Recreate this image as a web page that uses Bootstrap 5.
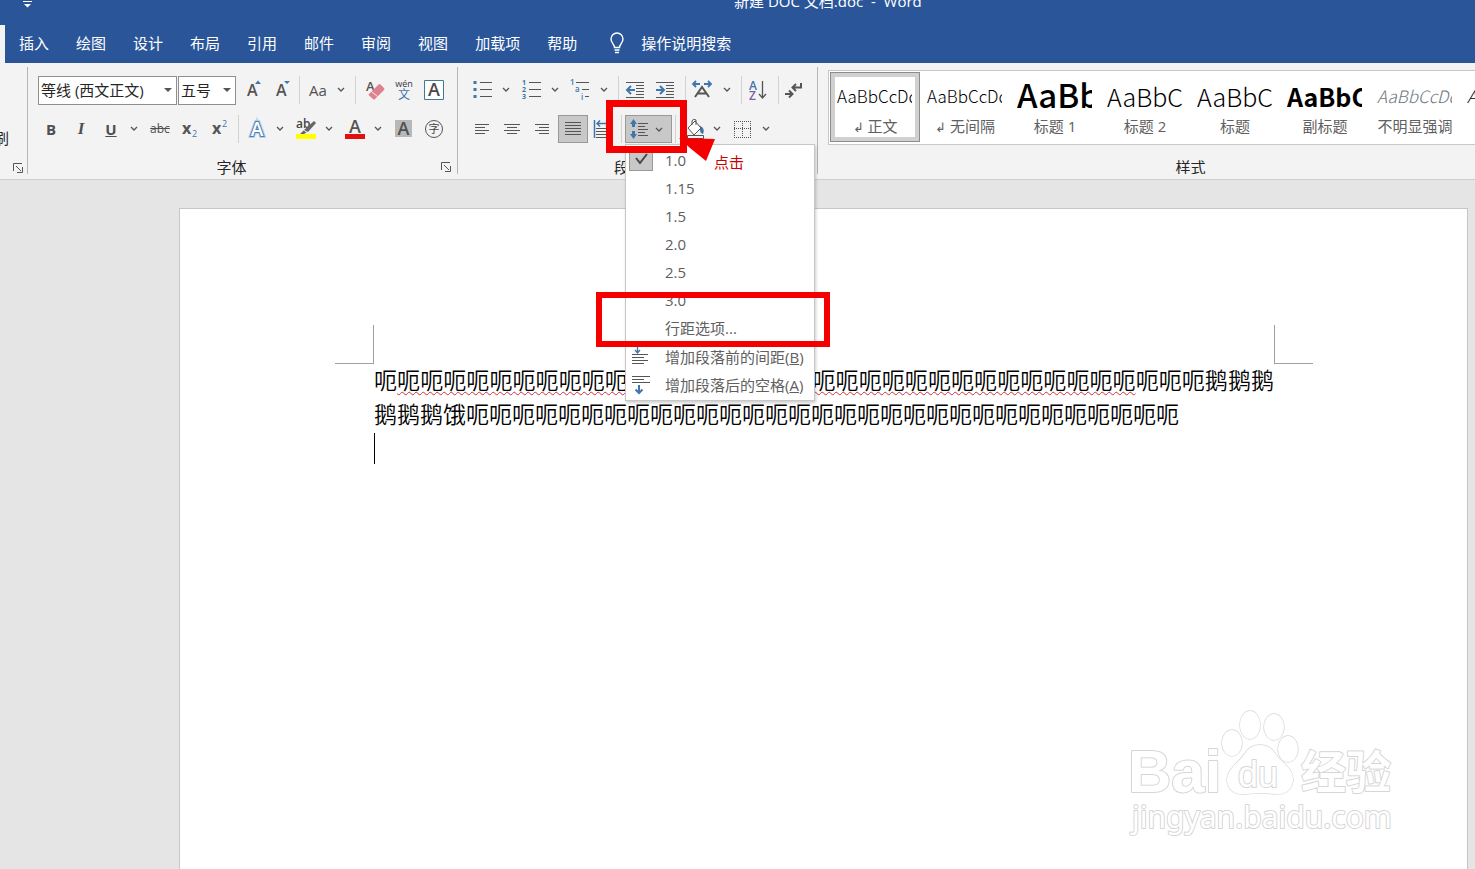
<!DOCTYPE html>
<html lang="zh-CN">
<head>
<meta charset="utf-8">
<meta name="viewport" content="width=device-width, initial-scale=1">
<title>新建 DOC 文档.doc - Word</title>
<link href="https://cdn.jsdelivr.net/npm/bootstrap@5.3.0/dist/css/bootstrap.min.css" rel="stylesheet">
<style>
body{font-family:"Open Sans","Noto Sans CJK SC",sans-serif;font-size:15px;line-height:20px;color:#262626;background:#e5e5e5;overflow:hidden}
.word-bar{background:#2a5699;color:#fff}
.word-title{height:25px;font-size:15px;line-height:2px;padding-left:734px;white-space:pre}
.qat{left:22px;top:0}
.tab-row{height:38px;gap:27px;padding-bottom:2px}
.tab-row a{color:#fff;text-decoration:none}
.tab-stub{width:5px;background:#f3f3f3;margin:0 -13px -2px 0}
.bulb{margin-left:5px;margin-right:-11px}
.ribbon{background:#f3f3f3;border-bottom:1px solid #cfcfcf;padding:4px 0 5px}
.rgroup{border-right:1px solid #b5b5b5;padding-top:9px;height:107px}
.rrow{height:28px;margin-bottom:11px}
.rlabel{height:22px;line-height:22px;margin:13px -8px 0}
.tbtn{width:30px;height:28px;padding:0;border:0;border-radius:0;background:none;color:#505050;display:flex;align-items:center;justify-content:center;flex:none}
.tbtn.drop{width:19px;padding-right:3px}
.tbtn.pressed{background:#c8c8c8;border:1px solid #999}
.tbtn.split{width:47px}
.tbtn svg{flex:none}
.tbtn.italic-i{font:italic bold 17px "Liberation Serif",serif}
.tbtn.struck{font-size:12px;text-decoration:line-through}
.vsep{width:1px;height:28px;margin:0 3px;background:#d2d2d2;flex:none}
.tbtn.launch,.launch{width:22px;height:22px}
.pick{height:29px;border:1px solid #8f8f8f;border-radius:0;font-size:15px;line-height:20px;padding:0 16px 0 2px;color:#262626;flex:none;background-size:8px 5px;background-position:right 4px center;--bs-form-select-bg-img:url("data:image/svg+xml,%3Csvg xmlns='http://www.w3.org/2000/svg' viewBox='0 0 8 5'%3E%3Cpath d='M0 0h8L4 4z' fill='%23555'/%3E%3C/svg%3E")}
.pick-font{width:139px;margin:0 1px 0 2px}
.pick-size{width:58px}
.clip-group{width:28px}
.para-group{padding-left:10px;padding-right:5px}
.brush{width:9px;padding-top:61px}
.tbtn.launch-sm{width:18px;height:12px}
.style-group{padding-left:10px;min-width:0}
.style-strip{min-width:747px}
.gallery{background:#fff;border:1px solid #c8c8c8;border-right:0;height:75px;margin-top:-6px;padding:1px}
.gal-item{width:90px;height:70px;border:5px solid transparent;padding:0 2px;background:#fff;color:#606060;flex:none}
.gal-item.chosen{border-color:#d0d0d0;outline:1px solid #8c8c8c;outline-offset:-1px}
.sample{display:block;height:38px;line-height:38px;width:75px;overflow:hidden;white-space:nowrap;color:#000;font-family:"Noto Sans CJK SC",sans-serif;text-align:left}
.s-text{font-size:17px;font-weight:300}
.s-mid{font-size:25px;font-weight:300}
.s-big{font-size:33px;line-height:34px}
.s-heavy{font-weight:500}
.gal-name{display:block;line-height:22px;white-space:nowrap;font-size:15px}
.style-label{margin:11px 0 0}
.ink{stroke:#555;fill:none}
.blue{stroke:#3f76ab;fill:none}
.space-menu{position:absolute;top:29px;left:0;width:190px;background:#fff;border:1px solid #c6c6c6;border-radius:0;padding:1px 0;box-shadow:1px 2px 3px #0003;z-index:10;display:block;margin:0;min-width:0}
.space-menu .dropdown-item{height:28px;font-size:15px;line-height:28px;padding:0 0 0 39px;color:#606060;position:relative}
.space-menu svg,.tick{position:absolute;left:3px;top:1px}
.tick{width:24px;height:24px;background:#c8c8c8;border:1px solid #999}
.space-menu .tick svg{left:-1px;top:-1px}
.ring{position:absolute;border:7px solid #f40000;z-index:12;pointer-events:none}
.ring-btn{left:-19px;top:-15px;width:81px;height:53px}
.ring-item{left:-29px;top:177px;width:234px;height:55px;border-width:6px}
.tip-arrow{position:absolute;left:54px;top:20px;z-index:13}
.tip-text{position:absolute;left:89px;top:37px;z-index:13;color:#c00;font-size:15px;white-space:nowrap}
.sheet{margin:28px 7px 0 179px;border:1px solid #c6c6c6;border-bottom:0;background:#fff;padding:116px 154px 0 155px}
.crop-l,.crop-r{width:39px;height:39px;border-bottom:1px solid #a0a0a0}
.crop-l{border-right:1px solid #a0a0a0}
.crop-r{border-left:1px solid #a0a0a0}
.doc-text{margin:-2px 39px 3px;font-family:"Noto Sans CJK SC",sans-serif;font-size:23px;font-weight:350;line-height:34px;color:#000;text-align:justify}
.typo{text-decoration:underline wavy #c8323c 1px;text-underline-offset:2px;text-decoration-skip-ink:none}
.caret{width:1px;height:31px;background:#000;margin:1px 39px}
.stamp{position:absolute;right:57px;bottom:19px;font-family:"Liberation Sans","Noto Sans CJK SC",sans-serif}
.stamp-url{font-family:"Noto Sans",sans-serif}
</style>
</head>
<body class="d-flex flex-column vh-100">
<header class="word-bar position-relative">
  <svg class="qat position-absolute" width="12" height="8"><path d="M1 1.500h9" stroke="#fff"/><path d="M2 4h7L5.500 7.500z" fill="#fff"/></svg>
  <div class="word-title">新建 DOC 文档.doc  -  Word</div>
  <nav class="tab-row d-flex align-items-center text-nowrap">
    <div class="tab-stub align-self-stretch"></div>
    <a href="#">插入</a><a href="#">绘图</a><a href="#">设计</a><a href="#">布局</a><a href="#">引用</a><a href="#">邮件</a><a href="#">审阅</a><a href="#">视图</a><a href="#">加载项</a><a href="#">帮助</a>
    <svg class="bulb" width="16" height="22" fill="none" stroke="#fff" stroke-width="1.400"><path d="M5.500 15.500C5.500 12 2 11 2 7a6 6 0 0 1 12 0c0 4-3.500 5-3.500 8.500zM5.500 18h5M6 20.500h4"/></svg>
    <a href="#">操作说明搜索</a>
  </nav>
</header>

<section class="ribbon d-flex" aria-label="功能区">
  <div class="rgroup clip-group d-flex flex-column flex-shrink-0 pt-0">
    <div class="brush d-flex justify-content-end overflow-hidden text-nowrap">格式刷</div>
    <button class="tbtn launch-sm mt-auto align-self-end" aria-label="剪贴板设置"><svg width="12" height="12"><path class="ink" d="M1.500 9V1.500H10M4 4l5 5M10.500 5v5.500H5"/></svg></button>
  </div>

  <div class="rgroup flex-shrink-0 ps-2 pe-2">
    <div class="rrow d-flex align-items-center">
      <select class="form-select pick pick-font" aria-label="字体"><option>等线 (西文正文)</option></select>
      <select class="form-select pick pick-size" aria-label="字号"><option>五号</option></select>
      <button class="tbtn" aria-label="增大字号"><svg width="30" height="28"><text x="11" y="20" font-size="16" font-weight="600" fill="#555">A</text><path d="M19 8l3-3.500L25 8z" fill="#3f76ab"/></svg></button>
      <button class="tbtn" aria-label="减小字号"><svg width="30" height="28"><text x="10" y="20" font-size="16" font-weight="600" fill="#555">A</text><path d="M18 5h6l-3 3z" fill="#3f76ab"/></svg></button>
      <span class="vsep"></span>
      <button class="tbtn">Aa</button>
      <button class="tbtn drop" aria-label="更改大小写"><svg width="8" height="6"><path class="ink" d="M1 1l3 3 3-3" stroke-width="1.300"/></svg></button>
      <span class="vsep"></span>
      <button class="tbtn" aria-label="清除格式"><svg width="30" height="28"><text x="7" y="15" font-size="13" font-weight="600" fill="#555">A</text><path d="M10 18l9.500-9.500q1-1 2 0l3.500 3.500q1 1 0 2L16 23q-1 1-2 0l-4-3.500q-1-.7 0-1.500z" fill="#e0818f"/><path d="M12.500 15.500l6 5" stroke="#f3f3f3"/></svg></button>
      <button class="tbtn" aria-label="拼音指南"><svg width="30" height="28"><text x="15" y="11" text-anchor="middle" font-size="9" fill="#333">wén</text><text x="15" y="23" text-anchor="middle" font-size="12" fill="#3f76ab">文</text></svg></button>
      <button class="tbtn" aria-label="字符边框"><svg width="30" height="28"><path d="M5.500 4.500h19v19h-19z" fill="#fff" stroke="#417a94"/><text x="15" y="20" text-anchor="middle" font-size="18" font-weight="600" fill="#504848">A</text></svg></button>
    </div>
    <div class="rrow d-flex align-items-center">
      <button class="tbtn fw-bold">B</button>
      <button class="tbtn italic-i">I</button>
      <button class="tbtn fw-bold text-decoration-underline">U</button>
      <button class="tbtn drop" aria-label="下划线样式"><svg width="8" height="6"><path class="ink" d="M1 1l3 3 3-3" stroke-width="1.300"/></svg></button>
      <button class="tbtn struck">abc</button>
      <button class="tbtn" aria-label="下标"><svg width="30" height="28"><text x="7" y="19" font-size="16" font-weight="700" fill="#555">x</text><text x="17" y="22" font-size="9" fill="#3f76ab">2</text></svg></button>
      <button class="tbtn" aria-label="上标"><svg width="30" height="28"><text x="7" y="19" font-size="16" font-weight="700" fill="#555">x</text><text x="17" y="12" font-size="9" fill="#3f76ab">2</text></svg></button>
      <span class="vsep"></span>
      <button class="tbtn" aria-label="文本效果"><svg width="30" height="28"><text x="15" y="21" text-anchor="middle" font-size="19" font-weight="600" fill="#fff" stroke="#b9d3ee" stroke-width="4" paint-order="stroke">A</text><text x="15" y="21" text-anchor="middle" font-size="19" font-weight="600" fill="#fff" stroke="#4a7fb5" stroke-width="2" paint-order="stroke">A</text></svg></button>
      <button class="tbtn drop" aria-label="文本效果选项"><svg width="8" height="6"><path class="ink" d="M1 1l3 3 3-3" stroke-width="1.300"/></svg></button>
      <button class="tbtn" aria-label="突出显示"><svg width="30" height="28"><text x="5" y="13" font-size="12" font-weight="600" fill="#444">ab</text><path d="M23 6l2 2-8 9-4-2zM12.500 15.500l3 2-2.500 1.500h-4z" fill="#666"/><path d="M5 19h20v5H5z" fill="#ff0"/></svg></button>
      <button class="tbtn drop" aria-label="突出显示颜色"><svg width="8" height="6"><path class="ink" d="M1 1l3 3 3-3" stroke-width="1.300"/></svg></button>
      <button class="tbtn" aria-label="字体颜色"><svg width="30" height="28"><text x="15" y="18" text-anchor="middle" font-size="18" font-weight="600" fill="#555">A</text><path d="M5 19h20v5H5z" fill="#e01010"/></svg></button>
      <button class="tbtn drop" aria-label="字体颜色选项"><svg width="8" height="6"><path class="ink" d="M1 1l3 3 3-3" stroke-width="1.300"/></svg></button>
      <button class="tbtn" aria-label="字符底纹"><svg width="30" height="28"><path d="M6 5h17v17H6z" fill="#b8b8b8"/><text x="14.500" y="20" text-anchor="middle" font-size="18" font-weight="600" fill="#505050">A</text></svg></button>
      <button class="tbtn" aria-label="带圈字符"><svg width="30" height="28"><circle cx="15" cy="14" r="8.500" class="ink"/><text x="15" y="18" text-anchor="middle" font-size="11" fill="#444">字</text></svg></button>
    </div>
    <div class="rlabel d-flex"><span class="flex-fill text-center">字体</span><button class="tbtn launch" aria-label="字体设置"><svg width="12" height="12"><path class="ink" d="M1.500 9V1.500H10M4 4l5 5M10.500 5v5.500H5"/></svg></button></div>
  </div>

  <div class="rgroup para-group flex-shrink-0">
    <div class="rrow d-flex align-items-center">
      <button class="tbtn" aria-label="项目符号"><svg width="30" height="28"><path class="ink" d="M12 6.500h12M12 13.500h12M12 20.500h12"/><path d="M5.500 5h3v3h-3zM5.500 12h3v3h-3zM5.500 19h3v3h-3z" fill="#3f76ab"/></svg></button>
      <button class="tbtn drop" aria-label="项目符号库"><svg width="8" height="6"><path class="ink" d="M1 1l3 3 3-3" stroke-width="1.300"/></svg></button>
      <button class="tbtn" aria-label="编号"><svg width="30" height="28" font-size="7" font-weight="700" fill="#3f76ab"><path class="ink" d="M12 6.500h12M12 13.500h12M12 20.500h12"/><text x="5" y="9">1</text><text x="5" y="16">2</text><text x="5" y="23">3</text></svg></button>
      <button class="tbtn drop" aria-label="编号库"><svg width="8" height="6"><path class="ink" d="M1 1l3 3 3-3" stroke-width="1.300"/></svg></button>
      <button class="tbtn" aria-label="多级列表"><svg width="30" height="28" font-size="8" font-weight="600" fill="#3f76ab"><path class="ink" d="M10 6.500h13M16 13.500h7M19 20.500h4"/><text x="4" y="9">1</text><text x="9" y="16">a</text><text x="15" y="24">i</text></svg></button>
      <button class="tbtn drop" aria-label="列表库"><svg width="8" height="6"><path class="ink" d="M1 1l3 3 3-3" stroke-width="1.300"/></svg></button>
      <span class="vsep"></span>
      <button class="tbtn" aria-label="减少缩进量"><svg width="30" height="28"><path class="ink" d="M4 6.500h18M14 9.500h8M14 12.500h8M14 15.500h8M14 18.500h8M4 21.500h18"/><path class="blue" stroke-width="2" d="M13 14H5M9 10l-4 4 4 4"/></svg></button>
      <button class="tbtn" aria-label="增加缩进量"><svg width="30" height="28"><path class="ink" d="M4 6.500h18M14 9.500h8M14 12.500h8M14 15.500h8M14 18.500h8M4 21.500h18"/><path class="blue" stroke-width="2" d="M4 14h8M8 10l4 4-4 4"/></svg></button>
      <span class="vsep"></span>
      <button class="tbtn" aria-label="中文版式"><svg width="30" height="28"><path class="blue" stroke-width="1.800" d="M4 8h7M7 5L4 8l3 3M15 8h7M19 5l3 3-3 3"/><path class="ink" stroke-width="2" d="M6 21l7-10 7 10M9 17.500h8"/></svg></button>
      <button class="tbtn drop" aria-label="中文版式选项"><svg width="8" height="6"><path class="ink" d="M1 1l3 3 3-3" stroke-width="1.300"/></svg></button>
      <span class="vsep"></span>
      <button class="tbtn" aria-label="排序"><svg width="30" height="28" font-size="12" font-weight="600"><text x="4" y="14" fill="#3f76ab">A</text><text x="4" y="24" fill="#7d5fa5">Z</text><path class="ink" d="M17.500 5v17M14 18l3.500 4 3.500-4" stroke-width="1.300"/></svg></button>
      <span class="vsep"></span>
      <button class="tbtn" aria-label="显示编辑标记"><svg width="30" height="28"><path class="ink" stroke-width="2" d="M19 7v4.500h-8M14 8l-3.500 3.500L14 15M3 18h7M7 14.500l3.500 3.500L7 21.500"/></svg></button>
    </div>
    <div class="rrow d-flex align-items-center">
      <button class="tbtn" aria-label="左对齐"><svg width="30" height="28"><path class="ink" d="M7 9.500h14M7 12.500h10M7 15.500h14M7 18.500h10"/></svg></button>
      <button class="tbtn" aria-label="居中"><svg width="30" height="28"><path class="ink" d="M6 9.500h16M9 12.500h10M6 15.500h16M9 18.500h10"/></svg></button>
      <button class="tbtn" aria-label="右对齐"><svg width="30" height="28"><path class="ink" d="M7 9.500h14M11 12.500h10M7 15.500h14M11 18.500h10"/></svg></button>
      <button class="tbtn pressed" aria-label="两端对齐"><svg width="30" height="28"><path class="ink" d="M7 7.500h16M7 10.500h16M7 13.500h16M7 16.500h16M7 19.500h16"/></svg></button>
      <button class="tbtn" aria-label="分散对齐"><svg width="30" height="28"><path class="blue" d="M6.500 5v18M23.500 5v18M9 8.500h12M12 5.500l-3 3 3 3M18 5.500l3 3-3 3" stroke-width="1.500"/><path class="ink" d="M8 13.500h14M8 16.500h14M8 19.500h14M8 22.500h14"/></svg></button>
      <span class="vsep"></span>
      <div class="dropdown">
        <button class="tbtn split pressed" aria-expanded="true" aria-label="行和段落间距"><svg width="45" height="28"><path class="ink" d="M12 8.500h10M12 11.500h7M12 14.500h10M12 17.500h7M12 20.500h10"/><path d="M7.500 4L11 9H9v3H6V9H4zM7.500 24L4 19h2v-3h3v3h2z" fill="#3f76ab"/><path class="ink" stroke-width="1.300" d="M30 13l3 3 3-3"/></svg></button>
        <ul class="dropdown-menu space-menu show">
          <li><a class="dropdown-item" href="#"><span class="tick"><svg width="24" height="24"><path d="M7 11l4 5 7-9" fill="none" stroke="#444" stroke-width="2"/></svg></span>1.0</a></li>
          <li><a class="dropdown-item" href="#">1.15</a></li>
          <li><a class="dropdown-item" href="#">1.5</a></li>
          <li><a class="dropdown-item" href="#">2.0</a></li>
          <li><a class="dropdown-item" href="#">2.5</a></li>
          <li><a class="dropdown-item" href="#">3.0</a></li>
          <li><a class="dropdown-item" href="#">行距选项...</a></li>
          <li class="border-top"><a class="dropdown-item" href="#"><svg width="24" height="24"><path class="ink" d="M3 10.500h16M3 13.500h12M3 16.500h16M3 19.500h12"/><path class="blue" d="M8.500 3v6M6 6l2.500 3L11 6" stroke-width="1.300"/></svg>增加段落前的间距(<u>B</u>)</a></li>
          <li><a class="dropdown-item" href="#"><svg width="24" height="24"><path class="ink" d="M3 4.500h18M3 7.500h12M3 10.500h18"/><path class="blue" d="M10 13v8M6.500 17.500L10 21l3.500-3.500" stroke-width="2"/></svg>增加段落后的空格(<u>A</u>)</a></li>
        </ul>
        <div class="ring ring-btn"></div>
        <div class="ring ring-item"></div>
        <svg class="tip-arrow" width="40" height="28"><path d="M0 3l36 1-9 22-16-13z" fill="#f40000"/></svg>
        <span class="tip-text">点击</span>
      </div>
      <span class="vsep"></span>
      <button class="tbtn" aria-label="底纹"><svg width="30" height="28"><path d="M17 9l6 3q3 3 1 7-3-1-3-4z" fill="#3f76ab"/><path d="M9 13l7-7 6 7-7 7z" fill="#fff" stroke="#555"/><path class="ink" d="M13 10V6q1-3 4-1v5M8.500 20.500h16v3h-16z"/></svg></button>
      <button class="tbtn drop" aria-label="底纹颜色"><svg width="8" height="6"><path class="ink" d="M1 1l3 3 3-3" stroke-width="1.300"/></svg></button>
      <button class="tbtn" aria-label="边框"><svg width="30" height="28"><path class="ink" d="M6 6.500h17M6 13.500h17M6 22.500h17M6.500 6v17M14.500 6v17M22.500 6v17" stroke-dasharray="1 1"/></svg></button>
      <button class="tbtn drop" aria-label="边框选项"><svg width="8" height="6"><path class="ink" d="M1 1l3 3 3-3" stroke-width="1.300"/></svg></button>
    </div>
    <div class="rlabel d-flex"><span class="flex-fill text-center">段落</span><button class="tbtn launch" aria-label="段落设置"><svg width="12" height="12"><path class="ink" d="M1.500 9V1.500H10M4 4l5 5M10.500 5v5.500H5"/></svg></button></div>
  </div>

  <div class="rgroup style-group border-end-0 flex-fill overflow-hidden">
    <div class="style-strip">
      <div class="gallery d-flex">
        <button class="gal-item chosen"><span class="sample s-text">AaBbCcDd</span><span class="gal-name"><small>↲</small> 正文</span></button>
        <button class="gal-item"><span class="sample s-text">AaBbCcDd</span><span class="gal-name"><small>↲</small> 无间隔</span></button>
        <button class="gal-item"><span class="sample s-big s-heavy">AaBb</span><span class="gal-name">标题 1</span></button>
        <button class="gal-item"><span class="sample s-mid">AaBbC</span><span class="gal-name">标题 2</span></button>
        <button class="gal-item"><span class="sample s-mid">AaBbC</span><span class="gal-name">标题</span></button>
        <button class="gal-item"><span class="sample s-mid fw-bold">AaBbC</span><span class="gal-name">副标题</span></button>
        <button class="gal-item"><span class="sample s-text fst-italic text-secondary">AaBbCcDd</span><span class="gal-name">不明显强调</span></button>
        <button class="gal-item"><span class="sample s-text fst-italic">AaBbCcDd</span><span class="gal-name">强调</span></button>
      </div>
      <div class="rlabel style-label d-flex"><span class="flex-fill text-center">样式</span><span class="launch"></span></div>
    </div>
  </div>
</section>

<main class="sheet flex-fill position-relative">
  <div class="d-flex justify-content-between"><div class="crop-l"></div><div class="crop-r"></div></div>
  <p class="doc-text">呃<span class="typo">呃呃呃呃呃呃呃呃呃呃呃呃呃呃呃呃呃呃呃呃呃呃呃呃呃呃呃呃呃呃呃呃</span>呃呃呃鹅鹅鹅鹅鹅鹅饿呃呃呃呃呃呃呃呃呃呃呃呃呃呃呃呃呃呃呃呃呃呃呃呃呃呃呃呃呃呃呃</p>
  <div class="caret"></div>
  <svg class="stamp" width="300" height="150" viewBox="0 0 300 150" fill="#fff" stroke="#d6d6d6" stroke-width="2" paint-order="stroke" stroke-linejoin="round">
    <text x="18" y="92" font-size="60" font-weight="700">Bai</text>
    <g stroke-width="1.300">
      <ellipse cx="122" cy="43" rx="10" ry="13"/><ellipse cx="140" cy="25" rx="10" ry="14"/><ellipse cx="164" cy="27" rx="10" ry="13"/><ellipse cx="178" cy="49" rx="10" ry="13"/>
      <path d="M150 45c9 0 13 5 17 11s17 12 16 25c-2 11-10 14-18 13s-21-1-30 0c-10 1-17-4-18-13 0-12 11-18 16-25s8-11 17-11z"/>
    </g>
    <text x="128" y="87" font-size="36">du</text>
    <text x="191" y="89" font-size="45" font-weight="700">经验</text>
    <text class="stamp-url" x="22" y="128" font-size="30">jingyan.baidu.com</text>
  </svg>
</main>
<script src="https://cdn.jsdelivr.net/npm/bootstrap@5.3.0/dist/js/bootstrap.bundle.min.js"></script>
</body>
</html>
